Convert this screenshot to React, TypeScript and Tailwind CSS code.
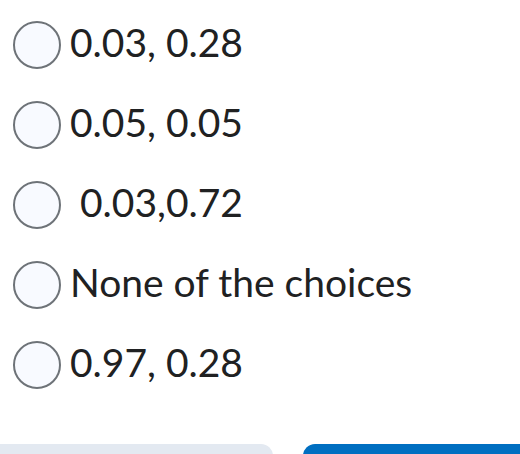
import React from 'react';

const OPTIONS = ['0.03, 0.28', '0.05, 0.05', '\u00a00.03,0.72', 'None of the choices', '0.97, 0.28'];

export default function App() {
  return (
    <div className="h-[454px] w-[520px] overflow-hidden bg-white" style={{ fontFamily: 'Lato, "Open Sans", sans-serif' }}>
      <div className="flex flex-col pt-[5px]">
        {OPTIONS.map(o => (
          <label key={o} className="flex h-20 items-center pl-[13px]">
            <span className="h-12 w-12 shrink-0 rounded-full border-2 border-[#6e7378] bg-[#f8faff]" />
            <span className="ml-[9px] pb-[6px] text-[39px] leading-none text-[#202122]">{o}</span>
          </label>
        ))}
      </div>
      <div className="mt-[39px] flex justify-between">
        <button className="h-12 w-[273px] rounded-tr-[12px] bg-[#e3e9f1]" />
        <button className="h-12 w-[217px] rounded-tl-[12px] bg-[#006fc1]" />
      </div>
    </div>
  );
}
